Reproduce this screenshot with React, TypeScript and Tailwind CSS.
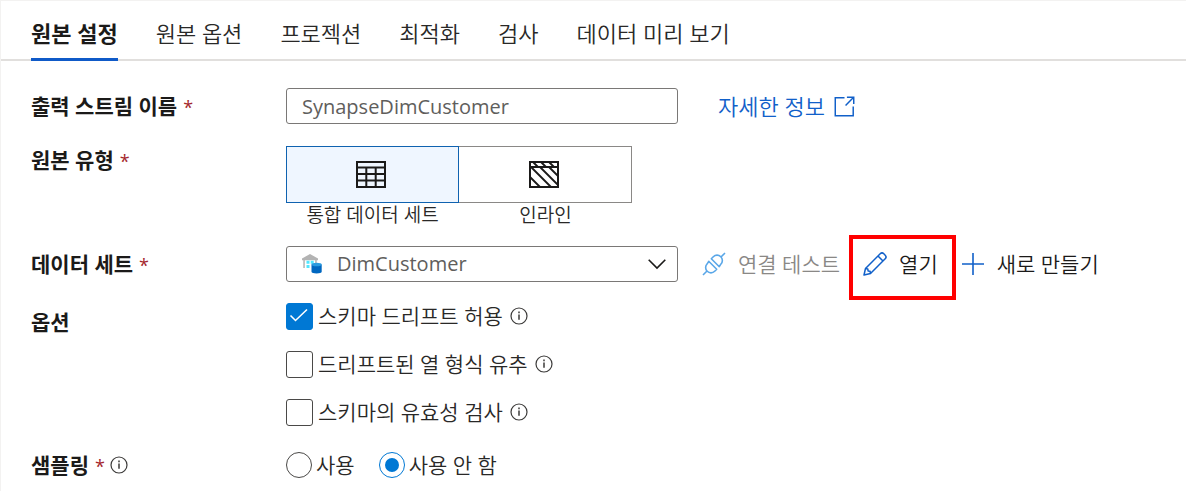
import { useState } from "react";
import type { ReactNode } from "react";

const tabs = ["원본 설정", "원본 옵션", "프로젝션", "최적화", "검사", "데이터 미리 보기"];

function InfoIcon() {
  return (
    <svg className="size-[18px] shrink-0" viewBox="0 0 18 18" fill="none" stroke="#3b3a39" strokeWidth="1.2" aria-hidden="true">
      <circle cx="9" cy="9" r="8" />
      <path d="M9 7.6v5.2" strokeWidth="1.5" />
      <path d="M9 4.6v1.6" strokeWidth="1.5" />
    </svg>
  );
}

function TableIcon() {
  return (
    <svg className="h-[27px] w-[30px]" viewBox="0 0 30 27" fill="none" stroke="#1b1a19" strokeWidth="2" aria-hidden="true">
      <rect x="1" y="1" width="28" height="25" />
      <path d="M1 6.500h28M1 13h28M1 19.500h28M10.300 6v20M19.700 6v20" />
    </svg>
  );
}

function InlineIcon() {
  return (
    <svg className="h-[27px] w-[30px]" viewBox="0 0 30 27" fill="none" stroke="#1b1a19" strokeWidth="2" aria-hidden="true">
      <rect x="1" y="1" width="28" height="25" />
      <path d="M1 6h28" />
      <path d="M1 16l10 10M2 6l20 20M11 6l18 18M20 6l9 9M4 1l5 5M12 1l5 5M20 1l5 5" strokeWidth="1.800" />
    </svg>
  );
}

function ExternalIcon() {
  return (
    <svg className="size-[21px]" viewBox="0 0 20 20" fill="none" stroke="#1160c9" strokeWidth="1.400" aria-hidden="true">
      <path d="M10 1.700H1.200v17.100h17.100V10M12.300 1.200h6.500v6.300M18.500 1.500L11 9" />
    </svg>
  );
}

function PlugIcon() {
  return (
    <svg className="size-6" viewBox="0 0 24 24" fill="none" stroke="#5aa7e8" strokeWidth="1.600" strokeLinejoin="round" aria-hidden="true">
      <path d="M1 23l4-4M19 5l4-4" />
      <path d="M6.700 9.300l8 8-2 2c-2.100 2.100-5.400 2.100-7.500 0s-2.100-5.400 0-7.500z" />
      <path d="M17.300 14.700l-8-8 2-2c2.100-2.100 5.400-2.100 7.500 0s2.100 5.400 0 7.500z" />
    </svg>
  );
}

function PencilIcon() {
  return (
    <svg className="size-6" viewBox="0 0 24 24" fill="none" stroke="#1160c9" strokeWidth="1.500" strokeLinejoin="round" aria-hidden="true">
      <path d="M1 23l1.500-6.500L17.200 1.800c1-1 2.600-1 3.600 0l1.400 1.400c1 1 1 2.600 0 3.600L7.500 21.500z" />
      <path d="M15 4l5 5M2.500 16.500l2.300.400.300 2.100 2 .300.400 2.200" />
    </svg>
  );
}

function PlusIcon() {
  return (
    <svg className="size-6" viewBox="0 0 24 24" fill="none" stroke="#1160c9" strokeWidth="1.600" aria-hidden="true">
      <path d="M12 1v22M1 12h22" />
    </svg>
  );
}

function SynapseIcon() {
  return (
    <svg className="size-5" viewBox="0 0 20 20" aria-hidden="true">
      <path d="M0 4.500L8 0l8 4.500v1.700H0z" fill="#b3b3b3" />
      <path d="M1.300 6h1.500v8H1.300zM13.200 6h1.500v3h-1.500z" fill="#b3b3b3" />
      <path d="M4.500 6.800h3v3h-3zM8.700 6.800h3v3h-3zM4.500 11h3v3h-3z" fill="#50e6ff" />
      <path d="M9.500 10.500v7.300c0 1 2.300 1.700 5.100 1.700s5.100-.700 5.100-1.700v-7.300z" fill="#0067c0" />
      <ellipse cx="14.600" cy="10.500" rx="5.100" ry="1.800" fill="#2a9be0" />
    </svg>
  );
}

function Required() {
  return <span className="ml-[6px] text-[18px] font-normal text-[#a4262c]">*</span>;
}

function Label({ children, required, htmlFor }: { children: ReactNode; required?: boolean; htmlFor?: string }) {
  return (
    <label htmlFor={htmlFor} className="block w-[255px] shrink-0 leading-7 font-bold text-[#1b1a19]">
      {children}
      {required && <Required />}
    </label>
  );
}

function CheckOption({ text, initial }: { text: string; initial: boolean }) {
  const [checked, setChecked] = useState(initial);
  return (
    <div className="flex h-8 items-center gap-[7px]">
      <label className="flex items-center gap-[5px]">
        <span className="relative flex size-[27px] items-center justify-center">
          <input
            type="checkbox"
            checked={checked}
            onChange={(e) => setChecked(e.target.checked)}
            className="size-[27px] appearance-none rounded-[3px] border border-[#4a4947] bg-white checked:border-[#0078d4] checked:bg-[#0078d4]"
          />
          {checked && (
            <svg className="pointer-events-none absolute inset-[3px] size-5" viewBox="0 0 20 20" fill="none" stroke="#fff" strokeWidth="1.600" aria-hidden="true">
              <path d="M1.500 9.500l5 5L18 3.500" />
            </svg>
          )}
        </span>
        {text}
      </label>
      <InfoIcon />
    </div>
  );
}

function RadioOption({ text, initial }: { text: string; initial: boolean }) {
  return (
    <label className="flex items-center gap-1">
      <span className="relative flex size-[26px] items-center justify-center">
        <input
          type="radio"
          name="sampling"
          defaultChecked={initial}
          className="peer size-[26px] appearance-none rounded-full border border-[#4a4947] bg-white checked:border-[#0078d4]"
        />
        <span className="pointer-events-none absolute inset-[6px] hidden rounded-full bg-[#0078d4] peer-checked:block" />
      </span>
      {text}
    </label>
  );
}

export default function App() {
  const [tab, setTab] = useState(0);
  const [kind, setKind] = useState(0);
  return (
    <div className="min-h-screen border-t border-l border-[#f3f2f1] bg-white font-['Open_Sans','Noto_Sans_CJK_KR',sans-serif] text-[21px] leading-7 font-[350] text-[#292827]">
      <nav className="flex h-[60px] gap-[38px] border-b-2 border-[#e1dfdd] pl-[30px]" role="tablist">
        {tabs.map((name, i) => (
          <button
            key={name}
            role="tab"
            aria-selected={i === tab}
            onClick={() => setTab(i)}
            className={
              i === tab
                ? "-mb-[2px] border-b-3 border-[#0f5ac8] pt-[11px] pb-1 text-[22px] font-bold whitespace-nowrap text-[#1b1a19]"
                : "pt-[11px] pb-[5px] text-[22px] whitespace-nowrap"
            }
          >
            {name}
          </button>
        ))}
      </nav>

      <form className="pl-[30px]" onSubmit={(e) => e.preventDefault()}>
        <div className="mt-[27px] flex items-center">
          <Label htmlFor="stream" required>출력 스트림 이름</Label>
          <input
            id="stream"
            defaultValue="SynapseDimCustomer"
            className="h-9 w-[392px] rounded-[3px] border border-[#7a7876] px-[15px] text-[20px] font-normal text-[#605e5c]"
          />
          <a href="#info" className="ml-10 flex items-center gap-[9px] text-[22px] whitespace-nowrap text-[#1160c9]">
            자세한 정보
            <ExternalIcon />
          </a>
        </div>

        <div className="mt-[22px] flex items-start">
          <Label required>원본 유형</Label>
          <div className="flex text-center text-[19px] leading-6" role="group" aria-label="원본 유형">
            {["통합 데이터 세트", "인라인"].map((name, i) => (
              <div key={name} className="w-[173px]">
                <button
                  type="button"
                  aria-label={name}
                  aria-pressed={i === kind}
                  onClick={() => setKind(i)}
                  className={
                    i === kind
                      ? "flex h-[57px] w-full items-center justify-center border border-[#0f62b0] bg-[#eff6ff] pr-[3px]"
                      : "flex h-[57px] w-full items-center justify-center border border-l-0 border-[#8a8886] bg-white pr-[3px]"
                  }
                >
                  {i === 0 ? <TableIcon /> : <InlineIcon />}
                </button>
                {name}
              </div>
            ))}
          </div>
        </div>

        <div className="mt-[19px] flex items-center">
          <Label htmlFor="dataset" required>데이터 세트</Label>
          <div className="relative w-[392px]">
            <select
              id="dataset"
              className="block h-9 w-full appearance-none rounded-[3px] border border-[#7a7876] bg-white pl-[50px] text-[20px] font-normal text-[#605e5c]"
            >
              <option>DimCustomer</option>
            </select>
            <span className="pointer-events-none absolute top-2 left-4">
              <SynapseIcon />
            </span>
            <svg className="pointer-events-none absolute top-3 right-3 h-3 w-[18px]" viewBox="0 0 18 12" fill="none" stroke="#1b1a19" strokeWidth="1.600" aria-hidden="true">
              <path d="M.700 1.700l8.300 8.300 8.300-8.300" />
            </svg>
          </div>
          <div className="ml-6 flex items-center gap-[23px] whitespace-nowrap">
            <button type="button" disabled className="flex items-center gap-3 text-[#8a8886]">
              <PlugIcon />
              연결 테스트
            </button>
            <button type="button" className="relative flex items-center gap-3 text-[#1b1a19]">
              <PencilIcon />
              열기
              <span className="pointer-events-none absolute -top-[15px] -right-[18px] -bottom-[22px] -left-[14px] border-4 border-[#ff0000]" />
            </button>
            <button type="button" className="flex items-center gap-3 text-[#1b1a19]">
              <PlusIcon />
              새로 만들기
            </button>
          </div>
        </div>

        <div className="mt-[18px] flex items-start">
          <div className="pt-2">
            <Label>옵션</Label>
          </div>
          <div className="flex flex-col gap-4">
            <CheckOption text="스키마 드리프트 허용" initial={true} />
            <CheckOption text="드리프트된 열 형식 유추" initial={false} />
            <CheckOption text="스키마의 유효성 검사" initial={false} />
          </div>
        </div>

        <div className="mt-[21px] flex h-8 items-center">
          <div className="flex w-[255px] items-center gap-[5px] font-bold text-[#1b1a19]">
            <span>
              샘플링
              <Required />
            </span>
            <InfoIcon />
          </div>
          <div className="flex gap-6" role="radiogroup" aria-label="샘플링">
            <RadioOption text="사용" initial={false} />
            <RadioOption text="사용 안 함" initial={true} />
          </div>
        </div>
      </form>
    </div>
  );
}
